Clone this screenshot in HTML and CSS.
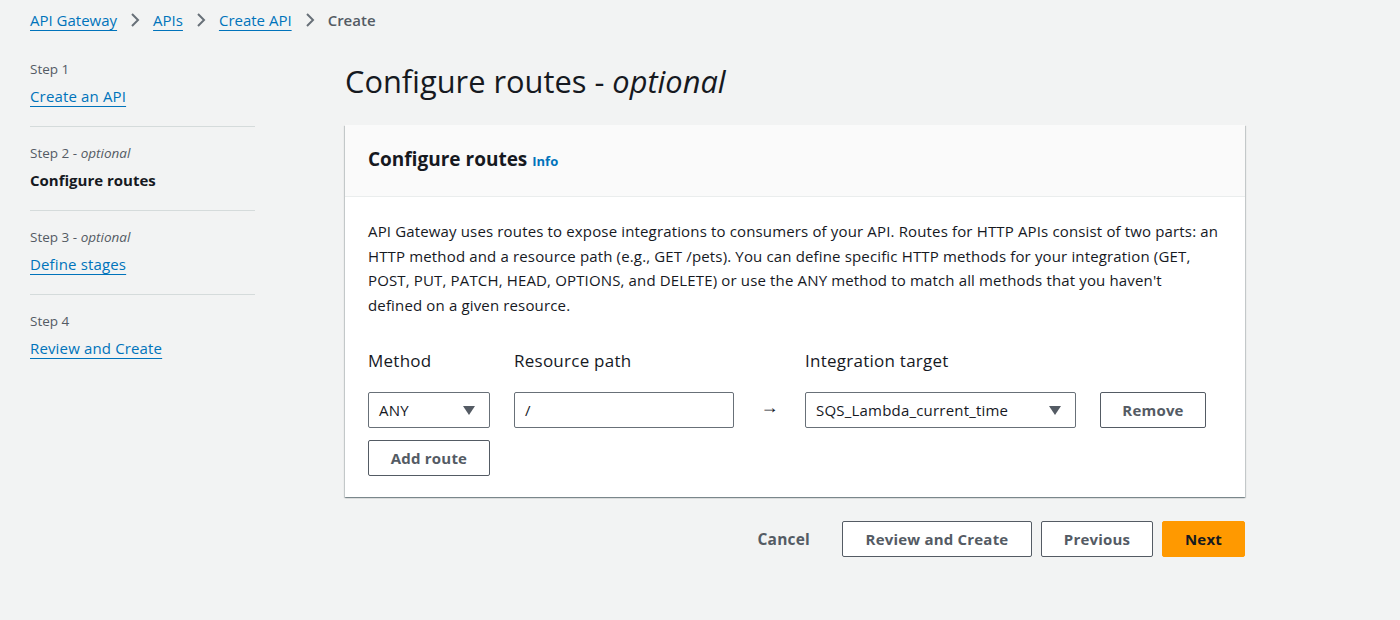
FILE: index.html
```html
<!DOCTYPE html>
<html>
<head>
<meta charset="utf-8">
<link rel="stylesheet" href="styles.css">
</head>
<body>
<nav class="crumbs">
  <a href="#">API Gateway</a>
  <svg class="chev" width="12" height="16" viewBox="0 0 12 16"><path d="M3 2l6 6-6 6" fill="none" stroke="#687078" stroke-width="2"/></svg>
  <a href="#">APIs</a>
  <svg class="chev" width="12" height="16" viewBox="0 0 12 16"><path d="M3 2l6 6-6 6" fill="none" stroke="#687078" stroke-width="2"/></svg>
  <a href="#">Create API</a>
  <svg class="chev" width="12" height="16" viewBox="0 0 12 16"><path d="M3 2l6 6-6 6" fill="none" stroke="#687078" stroke-width="2"/></svg>
  <span class="current">Create</span>
</nav>
<div class="layout">
  <aside class="steps">
    <div class="step">
      <div class="step-num">Step 1</div>
      <a class="step-link" href="#">Create an API</a>
    </div>
    <div class="step">
      <div class="step-num">Step 2 - <i>optional</i></div>
      <div class="step-active">Configure routes</div>
    </div>
    <div class="step">
      <div class="step-num">Step 3 - <i>optional</i></div>
      <a class="step-link" href="#">Define stages</a>
    </div>
    <div class="step last">
      <div class="step-num">Step 4</div>
      <a class="step-link" href="#">Review and Create</a>
    </div>
  </aside>
  <main class="main">
    <h1 class="title">Configure routes - <i>optional</i></h1>
    <section class="card">
      <header class="card-head">
        <h2>Configure routes <a class="info" href="#">Info</a></h2>
      </header>
      <div class="card-body">
        <p class="desc">API Gateway uses routes to expose integrations to consumers of your API. Routes for HTTP APIs consist of two parts: an HTTP method and a resource path (e.g., GET /pets). You can define specific HTTP methods for your integration (GET, POST, PUT, PATCH, HEAD, OPTIONS, and DELETE) or use the ANY method to match all methods that you haven't defined on a given resource.</p>
        <div class="routes">
          <div class="lbl">Method</div>
          <div class="lbl">Resource path</div>
          <div></div>
          <div class="lbl">Integration target</div>
          <div></div>
          <div class="select"><span>ANY</span><span class="caret"></span></div>
          <div class="input">/</div>
          <div class="arrow">&rarr;</div>
          <div class="select"><span>SQS_Lambda_current_time</span><span class="caret"></span></div>
          <button class="btn">Remove</button>
          <button class="btn">Add route</button>
        </div>
      </div>
    </section>
    <div class="actions">
      <button class="link-btn">Cancel</button>
      <button class="btn wide">Review and Create</button>
      <button class="btn prev">Previous</button>
      <button class="btn primary">Next</button>
    </div>
  </main>
</div>
</body>
</html>
```
FILE: styles.css
```css
* { box-sizing: border-box; }
body {
  margin: 0;
  background: #f2f3f3;
  font-family: "Open Sans", "Noto Sans", sans-serif;
  color: #16191f;
  font-size: 14px;
}
a { color: #0073bb; }
.crumbs {
  display: flex;
  align-items: center;
  gap: 12px;
  padding: 0 30px;
  height: 40px;
  font-size: 15px;
}
.crumbs a { text-decoration: underline; text-underline-offset: 4px; }
.crumbs .current { color: #545b64; font-weight: 600; }
.layout {
  display: flex;
  padding: 0 30px;
}
.steps {
  width: 225px;
  flex: none;
  padding-top: 19px;
}
.step {
  padding: 0 0 19px;
  margin-bottom: 16px;
  border-bottom: 1px solid #d5dbdb;
}
.step.last { border-bottom: none; }
.step-num {
  font-size: 13.5px;
  color: #545b64;
  line-height: 20px;
  margin-bottom: 6px;
}
.step-link, .step-active {
  font-size: 15px;
  letter-spacing: 0.15px;
  line-height: 22px;
  display: inline-block;
}
.step-link { text-underline-offset: 4px; }
.step-active { font-weight: 700; color: #16191f; letter-spacing: 0; }
.main {
  margin-left: 90px;
  width: 900px;
}
.title {
  margin: 0;
  font-weight: 400;
  font-size: 30.8px;
  line-height: 36px;
  padding-top: 23px;
  padding-bottom: 26px;
}
.card {
  background: #fff;
  box-shadow: 0 1px 1px 0 rgba(0,28,36,.3), 1px 1px 1px 0 rgba(0,28,36,.15), -1px 1px 1px 0 rgba(0,28,36,.15);
}
.card-head {
  background: #fafafa;
  border-bottom: 1px solid #eaeded;
  height: 72px;
  display: flex;
  align-items: center;
  padding: 0 23px 4px;
}
.card-head h2 {
  margin: 0;
  font-size: 19px;
  font-weight: 700;
}
.info {
  font-size: 13px;
  font-weight: 700;
  text-decoration: none;
}
.card-body {
  padding: 22px 26px 21px 23px;
}
.desc {
  margin: 0;
  font-size: 15px;
  letter-spacing: 0.15px;
  line-height: 24.6px;
}
.routes {
  margin-top: 33px;
  display: grid;
  grid-template-columns: 122px 220px 23px 271px 106px;
  column-gap: 24px;
  row-gap: 12px;
  align-items: center;
}
.lbl {
  font-size: 17px;
  letter-spacing: 0.25px;
  line-height: 22px;
  margin-bottom: 8px;
}
.select, .input {
  height: 36px;
  border: 1px solid #687078;
  border-radius: 2px;
  background: #fff;
  display: flex;
  align-items: center;
  padding: 0 10px;
  font-size: 15px;
  letter-spacing: 0.2px;
}
.select { justify-content: space-between; }
.caret {
  width: 0; height: 0;
  border-left: 6px solid transparent;
  border-right: 6px solid transparent;
  border-top: 9px solid #545b64;
  margin-right: 4px;
}
.arrow {
  font-size: 18px;
  text-align: center;
  margin-top: -8px;
}
.btn {
  height: 36px;
  background: #fff;
  border: 1px solid #545b64;
  border-radius: 2px;
  color: #545b64;
  font-family: inherit;
  font-weight: 700;
  font-size: 15px;
  letter-spacing: 0.2px;
  padding: 0 20px;
  cursor: pointer;
}
.actions {
  display: flex;
  justify-content: flex-end;
  align-items: center;
  gap: 9px;
  margin-top: 24px;
}
.link-btn {
  background: none;
  border: none;
  font-family: inherit;
  font-weight: 700;
  font-size: 15.5px;
  letter-spacing: 0.2px;
  color: #545b64;
  margin-right: 15px;
  padding: 0 8px;
}
.btn.wide { width: 190px; }
.btn.prev { width: 112px; }
.btn.primary {
  width: 83px;
  background: #ff9900;
  border-color: #ff9900;
  color: #16191f;
}
```
